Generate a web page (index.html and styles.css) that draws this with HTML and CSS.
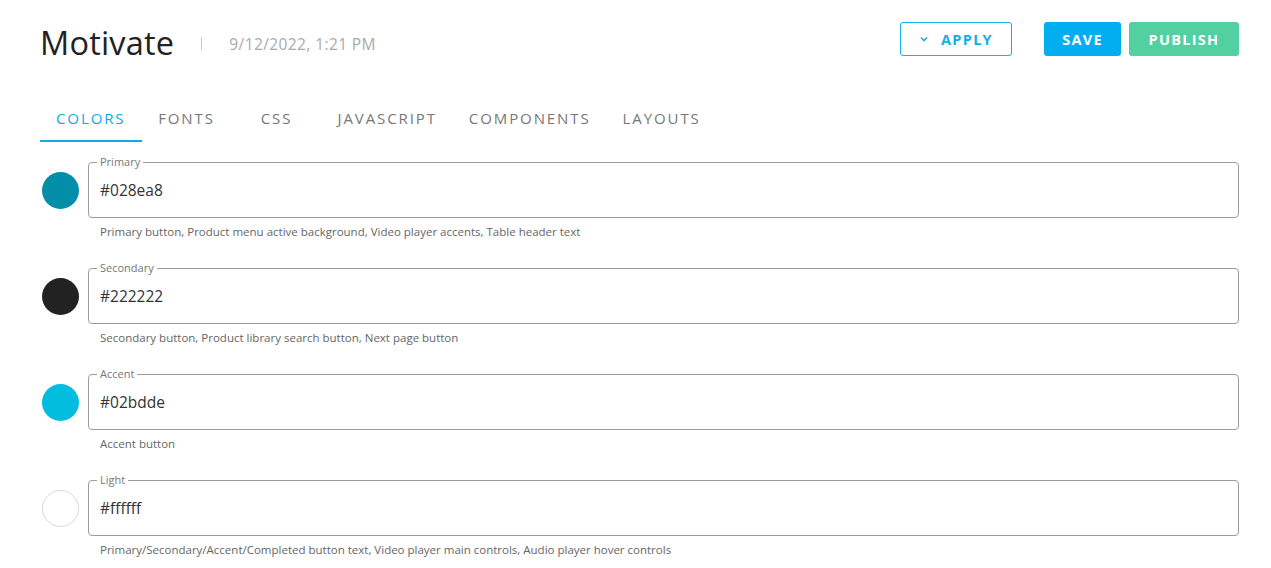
FILE: index.html
```html
<!DOCTYPE html>
<html lang="en">
<head>
  <meta charset="UTF-8">
  <title>Motivate - Theme</title>
  <meta name="viewport" content="width=device-width, initial-scale=1.0">
  <link rel="stylesheet" href="styles.css">
</head>
<body>
  <header class="top">
    <div class="title">
      <h1>Motivate</h1>
      <span class="sep"></span>
      <span class="date">9/12/2022, 1:21 PM</span>
    </div>
    <div class="actions">
      <button class="btn btn-outline">
        <svg width="10" height="10" viewBox="0 0 10 10"><path d="M2 3.5 L5 6.5 L8 3.5" fill="none" stroke="currentColor" stroke-width="1.6"/></svg>
        APPLY
      </button>
      <button class="btn btn-save">SAVE</button>
      <button class="btn btn-publish">PUBLISH</button>
    </div>
  </header>

  <nav class="tabs">
    <a class="tab active">Colors</a>
    <a class="tab">Fonts</a>
    <a class="tab">CSS</a>
    <a class="tab">Javascript</a>
    <a class="tab">Components</a>
    <a class="tab">Layouts</a>
  </nav>

  <div class="colors">
    <div class="row">
      <span class="swatch primary"></span>
      <div class="field">
        <fieldset>
          <legend>Primary</legend>
          <div class="value">#028ea8</div>
        </fieldset>
        <p class="help">Primary button, Product menu active background, Video player accents, Table header text</p>
      </div>
    </div>
    <div class="row">
      <span class="swatch secondary"></span>
      <div class="field">
        <fieldset>
          <legend>Secondary</legend>
          <div class="value">#222222</div>
        </fieldset>
        <p class="help">Secondary button, Product library search button, Next page button</p>
      </div>
    </div>
    <div class="row">
      <span class="swatch accent"></span>
      <div class="field">
        <fieldset>
          <legend>Accent</legend>
          <div class="value">#02bdde</div>
        </fieldset>
        <p class="help">Accent button</p>
      </div>
    </div>
    <div class="row">
      <span class="swatch light"></span>
      <div class="field">
        <fieldset>
          <legend>Light</legend>
          <div class="value">#ffffff</div>
        </fieldset>
        <p class="help">Primary/Secondary/Accent/Completed button text, Video player main controls, Audio player hover controls</p>
      </div>
    </div>
  </div>
</body>
</html>
```

FILE: styles.css
```css
body {
  margin: 0;
  padding: 22px 32px 0 40px;
  font-family: 'Open Sans', sans-serif;
  color: #222;
  background: #fff;
}
.top {
  display: flex;
  justify-content: space-between;
  align-items: center;
  height: 34px;
}
.title {
  display: flex;
  align-items: center;
  margin-top: 7px;
}
h1 {
  margin: 0;
  font-size: 32.5px;
  font-weight: 400;
  color: #222;
  letter-spacing: 0.2px;
}
.sep {
  width: 1px;
  height: 13px;
  background: #c8c8c8;
  margin: 2px 27px 0 27px;
}
.date {
  font-size: 15.5px;
  letter-spacing: 0.4px;
  color: #aaa;
  margin-top: 3px;
}
.actions {
  display: flex;
  align-items: center;
}
.btn {
  height: 34px;
  border-radius: 3px;
  font-family: 'Open Sans', sans-serif;
  font-size: 14.5px;
  font-weight: 700;
  letter-spacing: 1.3px;
  cursor: pointer;
  display: flex;
  align-items: center;
  justify-content: center;
}
.btn-outline {
  width: 112px;
  background: #fff;
  color: #14aeea;
  border: 1px solid #14aeea;
  margin-right: 32px;
  gap: 12px;
}
.btn-save {
  width: 77px;
  background: #03aef0;
  color: #fff;
  border: none;
  margin-right: 8px;
}
.btn-publish {
  width: 110px;
  background: #52d0a2;
  color: #fff;
  border: none;
}
.tabs {
  display: flex;
  margin-top: 38px;
  height: 48px;
}
.tab {
  min-width: 90px;
  padding: 0 16px;
  box-sizing: border-box;
  display: flex;
  align-items: center;
  justify-content: center;
  text-transform: uppercase;
  font-size: 15px;
  letter-spacing: 1.9px;
  color: #777;
  border-bottom: 2px solid transparent;
  padding-top: 2px;
  cursor: pointer;
}
.tab.active {
  color: #0ea9e6;
  border-bottom-color: #0ea9e6;
}
.colors {
  margin-top: 14px;
}
.row {
  display: flex;
  align-items: flex-start;
  margin-bottom: 23px;
}
.swatch {
  width: 37px;
  height: 37px;
  border-radius: 50%;
  box-sizing: border-box;
  margin: 16px 9px 0 2px;
  flex-shrink: 0;
}
.primary { background: #028ea8; }
.secondary { background: #222222; }
.accent { background: #02bdde; }
.light { background: #fff; border: 1px solid #d8d8d8; }
.field {
  flex: 1;
}
fieldset {
  margin: 0;
  padding: 0 8px;
  border: 1px solid #9c9c9c;
  border-radius: 4px;
}
legend {
  font-size: 11px;
  line-height: 12px;
  color: #777;
  padding: 0 3px;
}
.value {
  height: 49px;
  line-height: 44px;
  padding-left: 3px;
  font-size: 15.5px;
  color: #333;
}
.help {
  margin: 7px 0 0 12px;
  font-size: 11.5px;
  line-height: 14px;
  color: #666;
}
```
